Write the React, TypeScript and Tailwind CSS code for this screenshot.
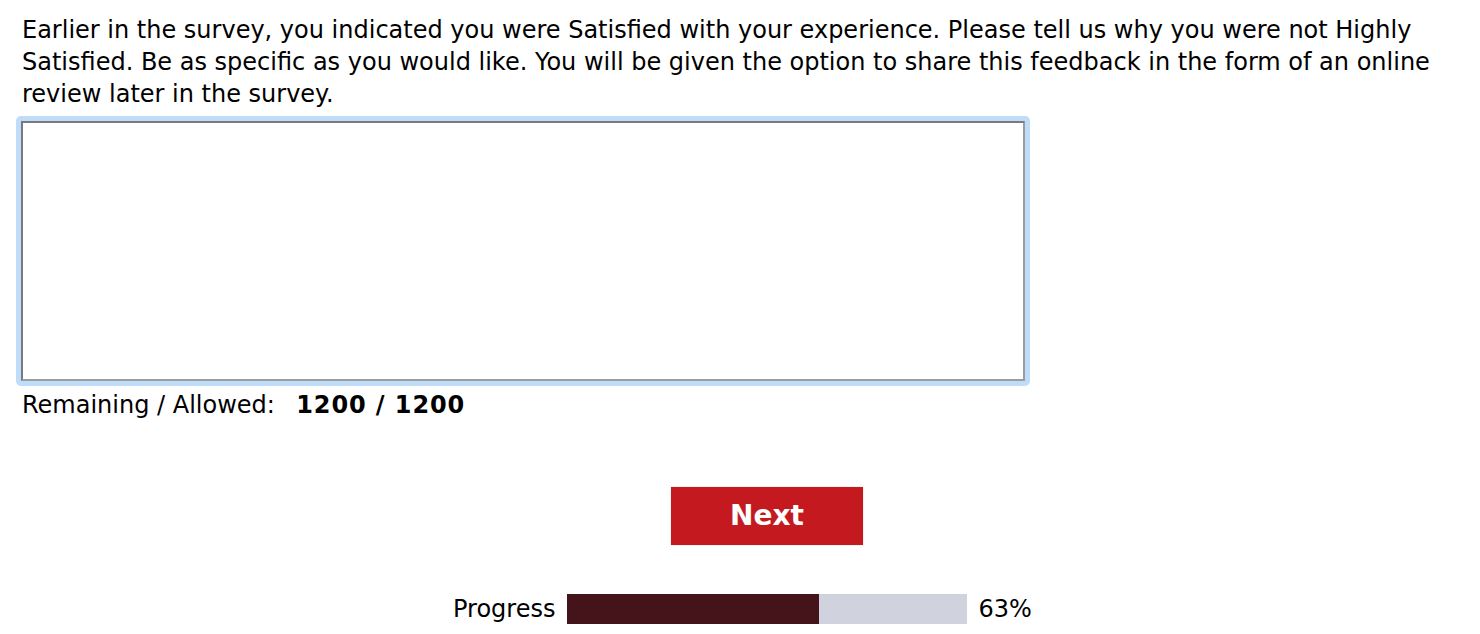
import { useState } from 'react';

export default function App() {
  const [text, setText] = useState('');
  const allowed = 1200;
  const pct = 63;

  return (
    <div className="min-h-[634px] bg-white text-black font-['DejaVu_Sans',Verdana,sans-serif]">
      <div className="pl-[22px] pr-[10px] pt-[14px]">
        <p className="text-[24px] leading-[32px]">
          Earlier in the survey, you indicated you were Satisfied with your experience. Please tell us why you were not Highly
          <br />
          Satisfied. Be as specific as you would like. You will be given the option to share this feedback in the form of an online
          <br />
          review later in the survey.
        </p>

        <div className="mt-[6px] -ml-[6px] w-[1014px] rounded-[5px] bg-[#bfdcfb] p-[5px]">
          <textarea
            value={text}
            onChange={(e) => setText(e.target.value.slice(0, allowed))}
            className="block h-[260px] w-full resize-none border-2 border-t-[#7a7a7a] border-l-[#7a7a7a] border-b-[#9c9c9c] border-r-[#9c9c9c] bg-white p-1 text-[18px] outline-none"
          />
        </div>

        <div className="mt-[3px] text-[24px] leading-[32px]">
          Remaining / Allowed:&nbsp;&nbsp;
          <span className="ml-[6px] font-bold tracking-[0.9px]">
            {allowed - text.length} / {allowed}
          </span>
        </div>
      </div>

      <div className="mt-[66px] flex justify-center pl-[54px]">
        <button className="h-[58px] w-[192px] bg-[#c41a1f] text-[28px] font-bold text-white shadow-[0_0_1px_rgba(0,0,0,0.3)]">
          Next
        </button>
      </div>

      <div className="mt-[49px] flex items-center pl-[453px]">
        <span className="text-[24px] leading-[30px]">Progress</span>
        <div className="ml-[12px] flex h-[30px] w-[400px] bg-[#d0d3de]">
          <div className="h-full bg-[#45141a]" style={{ width: `${pct}%` }} />
        </div>
        <span className="ml-[11px] text-[24px] leading-[30px]">{pct}%</span>
      </div>
    </div>
  );
}
